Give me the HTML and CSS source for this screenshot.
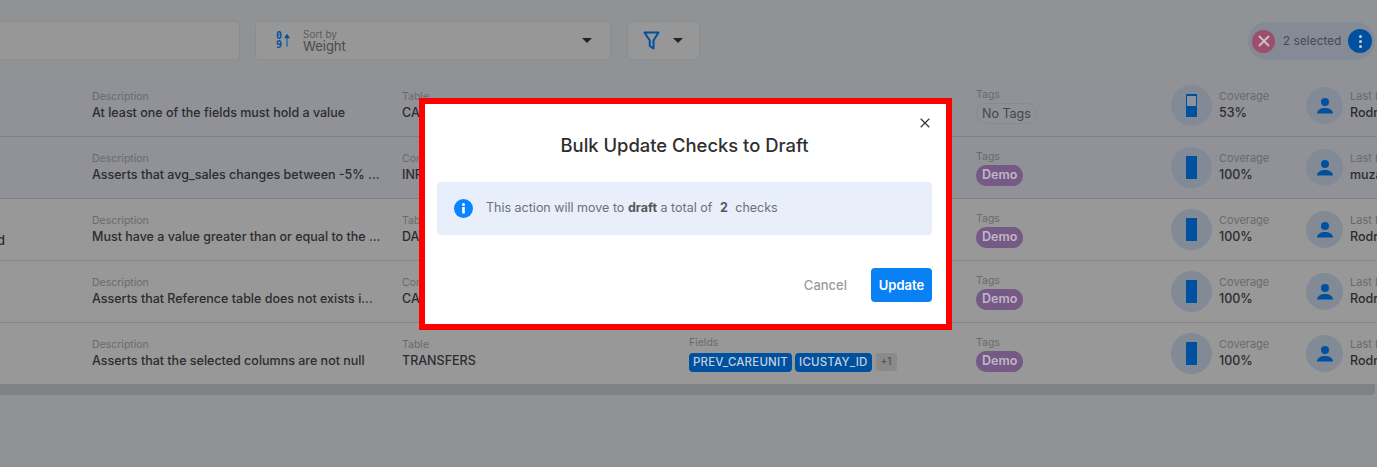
FILE: index.html
```html
<!DOCTYPE html>
<html lang="en">
<head>
<meta charset="utf-8">
<title>Bulk Update Checks to Draft</title>
<link rel="stylesheet" href="styles.css">
</head>
<body>
<div class="page">
  <header class="toolbar">
    <div class="box search"></div>
    <div class="box sort">
      <div class="sort-icon">
        <span class="digits"><span>0</span><span>9</span></span>
        <svg width="8" height="18" viewBox="0 0 8 18"><path d="M4 18V3M1 6L4 1.500 7 6z" fill="#0050a0" stroke="#0050a0" stroke-width="1.300"/></svg>
      </div>
      <div class="sort-text">
        <span class="sort-label">Sort by</span>
        <span class="sort-value">Weight</span>
      </div>
      <span class="caret"></span>
    </div>
    <div class="box filter">
      <svg width="17" height="19" viewBox="0 0 17 19"><path d="M1.500 1.500h14L10.500 9.500v8L6.800 15V9.500z" fill="none" stroke="#0050a0" stroke-width="2" stroke-linejoin="round"/></svg>
      <span class="caret"></span>
    </div>
    <div class="selected">
      <span class="sel-x"><svg width="14" height="14" viewBox="0 0 14 14"><path d="M2 2l10 10M12 2L2 12" stroke="#cdbcc2" stroke-width="2"/></svg></span>
      <span class="sel-text">2 selected</span>
      <span class="sel-more"><i></i><i></i><i></i></span>
    </div>
  </header>

  <section class="rows">
    <article class="row picked">
      <div class="lead"></div>
      <div class="cell desc"><span class="label">Description</span><span class="value">At least one of the fields must hold a value</span></div>
      <div class="cell table"><span class="label">Table</span><span class="value">CATALOG</span></div>
      <div class="cell fields"><span class="label">Fields</span></div>
      <div class="cell tags"><span class="label">Tags</span><span class="tag none">No Tags</span></div>
      <div class="metric"><span class="cov"><span class="bar"><span class="bar-empty half"></span></span></span><div class="cell"><span class="label">Coverage</span><span class="value">53%</span></div></div>
      <div class="metric user"><span class="avatar"><svg width="18" height="18" viewBox="0 0 18 18"><circle cx="9" cy="5" r="4" fill="#0050a0"/><path d="M1 16.500c0-3.500 4-5.500 8-5.500s8 2 8 5.500z" fill="#0050a0"/></svg></span><div class="cell"><span class="label">Last Editor</span><span class="value">Rodrigo</span></div></div>
    </article>
    <article class="row picked">
      <div class="lead"></div>
      <div class="cell desc"><span class="label">Description</span><span class="value">Asserts that avg_sales changes between -5% ...</span></div>
      <div class="cell table"><span class="label">Computed Table</span><span class="value">INPATIENT</span></div>
      <div class="cell fields"><span class="label">Fields</span></div>
      <div class="cell tags"><span class="label">Tags</span><span class="tag demo">Demo</span></div>
      <div class="metric"><span class="cov"><span class="bar"></span></span><div class="cell"><span class="label">Coverage</span><span class="value">100%</span></div></div>
      <div class="metric user"><span class="avatar"><svg width="18" height="18" viewBox="0 0 18 18"><circle cx="9" cy="5" r="4" fill="#0050a0"/><path d="M1 16.500c0-3.500 4-5.500 8-5.500s8 2 8 5.500z" fill="#0050a0"/></svg></span><div class="cell"><span class="label">Last Editor</span><span class="value">muzammil</span></div></div>
    </article>
    <article class="row">
      <div class="lead"><span class="lead-text">d</span></div>
      <div class="cell desc"><span class="label">Description</span><span class="value">Must have a value greater than or equal to the ...</span></div>
      <div class="cell table"><span class="label">Table</span><span class="value">DATA</span></div>
      <div class="cell fields"><span class="label">Fields</span></div>
      <div class="cell tags"><span class="label">Tags</span><span class="tag demo">Demo</span></div>
      <div class="metric"><span class="cov"><span class="bar"></span></span><div class="cell"><span class="label">Coverage</span><span class="value">100%</span></div></div>
      <div class="metric user"><span class="avatar"><svg width="18" height="18" viewBox="0 0 18 18"><circle cx="9" cy="5" r="4" fill="#0050a0"/><path d="M1 16.500c0-3.500 4-5.500 8-5.500s8 2 8 5.500z" fill="#0050a0"/></svg></span><div class="cell"><span class="label">Last Editor</span><span class="value">Rodrigo</span></div></div>
    </article>
    <article class="row">
      <div class="lead"></div>
      <div class="cell desc"><span class="label">Description</span><span class="value">Asserts that Reference table does not exists i...</span></div>
      <div class="cell table"><span class="label">Computed Table</span><span class="value">CATALOG</span></div>
      <div class="cell fields"><span class="label">Fields</span></div>
      <div class="cell tags"><span class="label">Tags</span><span class="tag demo">Demo</span></div>
      <div class="metric"><span class="cov"><span class="bar"></span></span><div class="cell"><span class="label">Coverage</span><span class="value">100%</span></div></div>
      <div class="metric user"><span class="avatar"><svg width="18" height="18" viewBox="0 0 18 18"><circle cx="9" cy="5" r="4" fill="#0050a0"/><path d="M1 16.500c0-3.500 4-5.500 8-5.500s8 2 8 5.500z" fill="#0050a0"/></svg></span><div class="cell"><span class="label">Last Editor</span><span class="value">Rodrigo</span></div></div>
    </article>
    <article class="row last">
      <div class="lead"></div>
      <div class="cell desc"><span class="label">Description</span><span class="value">Asserts that the selected columns are not null</span></div>
      <div class="cell table"><span class="label">Table</span><span class="value">TRANSFERS</span></div>
      <div class="cell fields"><span class="label">Fields</span>
        <div class="chips"><span class="chip">PREV_CAREUNIT</span><span class="chip">ICUSTAY_ID</span><span class="more">+1</span></div>
      </div>
      <div class="cell tags"><span class="label">Tags</span><span class="tag demo">Demo</span></div>
      <div class="metric"><span class="cov"><span class="bar"></span></span><div class="cell"><span class="label">Coverage</span><span class="value">100%</span></div></div>
      <div class="metric user"><span class="avatar"><svg width="18" height="18" viewBox="0 0 18 18"><circle cx="9" cy="5" r="4" fill="#0050a0"/><path d="M1 16.500c0-3.500 4-5.500 8-5.500s8 2 8 5.500z" fill="#0050a0"/></svg></span><div class="cell"><span class="label">Last Editor</span><span class="value">Rodrigo</span></div></div>
    </article>
    <div class="scrollbar"></div>
  </section>
</div>

<div class="modal" role="dialog">
  <button class="close" aria-label="Close"><svg width="10" height="10" viewBox="0 0 10 10"><path d="M.7.7l8.600 8.600M9.300.7L.7 9.300" stroke="#3a3a3a" stroke-width="1.300"/></svg></button>
  <h2 class="modal-title">Bulk Update Checks to Draft</h2>
  <div class="notice">
    <svg width="19" height="19" viewBox="0 0 19 19"><circle cx="9.500" cy="9.500" r="9.500" fill="#0a84ff"/><rect x="8.200" y="8" width="2.600" height="6.500" rx=".5" fill="#fff"/><circle cx="9.500" cy="5.500" r="1.500" fill="#fff"/></svg>
    <p class="notice-text">This action will move to <b>draft</b> a total of <b class="count">2</b> checks</p>
  </div>
  <div class="actions">
    <button class="btn-cancel">Cancel</button>
    <button class="btn-update">Update</button>
  </div>
</div>
</body>
</html>
```

FILE: styles.css
```css
* { box-sizing: border-box; }
html, body { margin: 0; height: 100%; }
body {
  background: #8f9396;
  font-family: Inter, "Liberation Sans", sans-serif;
  color: #2c2c2e;
  overflow: hidden;
}
.page { width: 1377px; height: 467px; overflow: hidden; }

/* toolbar */
.toolbar { display: flex; align-items: flex-start; height: 75px; padding-top: 21px; }
.box {
  height: 39px;
  background: #979797;
  border: 1px solid #8c8c8c;
  border-radius: 4px;
  display: flex;
  align-items: center;
}
.search { width: 240px; margin-right: 15px; flex: none; border-left: 0; border-radius: 0 4px 4px 0; }
.sort { width: 356px; margin-right: 16px; padding: 0 18px 0 20px; flex: none; }
.sort-icon { flex: none; display: flex; align-items: flex-start; gap: 2px; margin: 0 13px 2px 0; width: 14px; }
.digits { display: flex; flex-direction: column; gap: 1px; font: 700 10px/8px "DejaVu Sans Mono", monospace; color: #0050a0; width: 6px; padding-top: 1px; }
.sort-text { display: flex; flex-direction: column; flex: 1; }
.sort-label { font-size: 10px; line-height: 11px; color: #5d5d5d; }
.sort-value { font-size: 13px; line-height: 13px; color: #4a4a4a; }
.caret { width: 0; height: 0; border: 5px solid transparent; border-top-color: #222; border-bottom: 0; }
.filter { width: 73px; padding-left: 15px; gap: 13px; flex: none; }
.selected {
  margin-left: 548px;
  width: 127px;
  height: 38px;
  flex: none;
  margin-top: 1px;
  border-radius: 19px;
  background: #848b97;
  display: flex;
  align-items: center;
  padding: 0 3px 0 4px;
}
.sel-x {
  width: 23px; height: 23px; border-radius: 50%;
  background: #9c4f6c;
  display: flex; align-items: center; justify-content: center;
}
.sel-text { margin-left: 8px; font-size: 11.500px; color: #44474d; flex: 1; letter-spacing: .2px; }
.sel-more {
  width: 24px; height: 24px; border-radius: 50%;
  background: #0050a0;
  display: flex; flex-direction: column; align-items: center; justify-content: center; gap: 2px;
}
.sel-more i { width: 3px; height: 3px; border-radius: 50%; background: #c5cedb; }

/* rows */
.row {
  height: 62px;
  display: flex;
  align-items: center;
  background: #989898;
  border-bottom: 1px solid #858585;
}
.row.picked { background: #909298; border-bottom-color: #7f8186; }
.row.last { border-bottom: 0; height: 61px; }
.lead { width: 92px; flex: none; font-size: 13px; font-weight: 500; overflow: hidden; }
.lead-text { display: block; margin: 20px 0 0 -3px; }
.cell { display: flex; flex-direction: column; min-width: 0; }
.label { font-size: 10.500px; line-height: 14px; color: #6a6a6a; white-space: nowrap; }
.value { font-size: 12.500px; line-height: 18px; font-weight: 500; color: #2c2c2e; white-space: nowrap; }
.desc { width: 310px; flex: none; padding-top: 1px; }
.table { width: 287px; flex: none; padding-top: 1px; }
.fields { width: 287px; flex: none; }
.chips { display: flex; align-items: center; gap: 3px; margin-top: 3px; }
.chip {
  height: 19px; padding: 0 4px;
  background: #0050a0; color: #c4cfdc;
  font-size: 11.500px; line-height: 19px; font-weight: 500;
  border-radius: 4px; letter-spacing: .2px;
}
.more {
  margin-left: 1px; height: 18px; width: 21px;
  background: #8a8a8a; color: #4c4c4c;
  font-size: 10.500px; line-height: 18px; text-align: center; border-radius: 3px;
}
.tags { width: 195px; flex: none; align-items: flex-start; padding-top: 1px; }
.tag { margin-top: 1px; font-size: 12.500px; line-height: 20px; border-radius: 10px; }
.tag.none { padding: 0 5px; border: 1px solid #8b8b8f; color: #454545; line-height: 19px; }
.tag.demo { padding: 0 6px; background: #755a86; color: #c2b6c9; font-weight: 600; height: 21px; }

.metric { display: flex; align-items: center; flex: none; width: 135px; gap: 7px; }
.metric .label { font-size: 11px; line-height: 12px; margin-bottom: 2px; }
.metric.user { width: 120px; gap: 7px; }
.cov {
  width: 41px; height: 41px; border-radius: 50%; background: #828a96;
  display: flex; align-items: center; justify-content: center; flex: none;
}
.bar { width: 11px; height: 23px; background: #0050a0; padding: 2px 1px 0; display: block; }
.bar-empty { display: block; background: #8d939d; }
.bar-empty.half { height: 10px; }
.avatar {
  width: 37px; height: 37px; border-radius: 50%; background: #828a96;
  display: flex; align-items: center; justify-content: center; flex: none;
}
.scrollbar { height: 11px; background: #808184; border-radius: 0 0 4px 0; width: 1375px; }

/* dialog */
.modal {
  position: absolute;
  left: 419px; top: 98px;
  width: 533px; height: 232px;
  background: #fff;
  border: 6px solid #f00;
  padding: 0 14px 0 12px;
  display: flex;
  flex-direction: column;
}
.close {
  position: absolute; right: 16px; top: 14px;
  padding: 0; border: 0; background: none; line-height: 0;
}
.modal-title {
  margin: 29px 0 0;
  font-size: 18.400px; line-height: 24px; font-weight: 500;
  text-align: center; color: #2f2f31;
}
.notice {
  margin-top: 25px;
  height: 53px;
  background: #e8eefa;
  border-radius: 4px;
  display: flex; align-items: center;
  padding-left: 17px; gap: 13px;
}
.notice-text { margin: 0 0 2px; font-size: 12.500px; color: #6e7074; }
.notice-text b { color: #55575b; font-weight: 700; }
.count { margin: 0 4px; }
.actions { margin-top: 33px; display: flex; justify-content: flex-end; align-items: center; gap: 24px; }
.btn-cancel { padding: 0; border: 0; background: none; color: #9b9b9b; font: 500 13px Inter, sans-serif; }
.btn-update {
  width: 61px; height: 34px; border: 0; border-radius: 4px;
  background: #0a80f5; color: #fff; font: 600 13px Inter, sans-serif;
}
```
